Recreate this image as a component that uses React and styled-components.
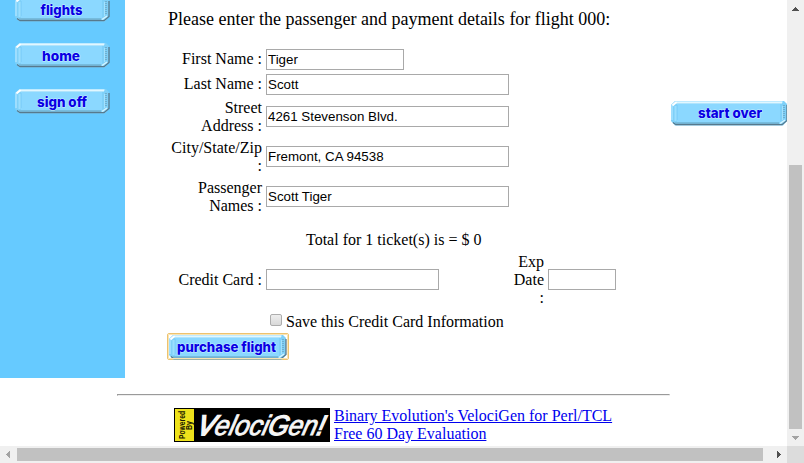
import React from "react";
import styled, { createGlobalStyle } from "styled-components";

const GlobalStyle = createGlobalStyle`
  * { box-sizing: border-box; }
  body { margin: 0; background: #fff; color: #000; overflow: hidden; }
`;

const Window = styled.div`
  display: grid;
  grid-template: 446px 17px / 787px 17px;
  width: 804px;
  height: 463px;
  overflow: hidden;
  font: 16px/18px "Liberation Serif", "Times New Roman", serif;
`;

const Page = styled.div`
  display: flex;
  flex-direction: column;
  overflow: hidden;
`;

const Columns = styled.div`
  display: flex;
  height: 378px;
`;

const Sidebar = styled.nav`
  display: flex;
  flex-direction: column;
  gap: 20px;
  flex: 0 0 125px;
  margin-top: -4px;
  padding: 0 0 0 15px;
  background: #66caff;
`;

const Content = styled.main`
  flex: 0 0 503px;
  padding: 9px 0 0 43px;
`;

const Aside = styled.aside`
  flex: 1 0 159px;
  padding: 100px 0 0 43px;
`;

const ButtonFace = styled.button`
  display: block;
  width: ${(p) => p.$w}px;
  height: 26px;
  padding: 0;
  border: 0;
  background: none;
  cursor: pointer;
  svg { display: block; }
`;

const FocusFrame = styled.div`
  width: 122px;
  height: 27px;
  margin: 2px 0 0 -1px;
  padding: 0 0 0 1px;
  border: 1px solid #edc36f;
  border-radius: 2px;
  outline: 1px solid #f9e4b5;
  outline-offset: -2px;
`;

const ButtonText = styled.text`
  font: 800 13.5px Inter, "Liberation Sans", sans-serif;
  fill: #0a00e4;
  stroke: #c9efff;
  stroke-width: 1px;
  stroke-linejoin: round;
  paint-order: stroke;
`;

const Heading = styled.h1`
  margin: 0 0 20px;
  height: 20px;
  font-size: 18px;
  line-height: 20px;
  font-weight: 400;
  white-space: nowrap;
`;

const Fields = styled.form`
  display: flex;
  flex-direction: column;
  gap: 4px;
`;

const Row = styled.div`
  display: grid;
  grid-template-columns: 94px auto;
  column-gap: 4px;
  align-items: center;
  justify-content: start;
  height: ${(p) => p.$h}px;
`;

const Label = styled.label`
  text-align: right;
  white-space: nowrap;
`;

const ShortLabel = styled(Label)`
  align-self: start;
  padding-top: 1px;
`;

const TextInput = styled.input`
  display: block;
  align-self: start;
  width: ${(p) => p.$w}px;
  height: 21px;
  margin: ${(p) => p.$drop || 0}px 0 0;
  padding: 1px;
  border: 1px solid #a9a9a9;
  border-radius: 0;
  outline: none;
  background: #fff;
  color: #000;
  font: 13.33px "Liberation Sans", Arial, sans-serif;
`;

const Total = styled.p`
  margin: 12px 0 0 138px;
  height: 18px;
  white-space: nowrap;
`;

const PaymentRow = styled.div`
  display: grid;
  grid-template-columns: 94px 173px 101px 68px;
  column-gap: 4px;
  align-items: center;
  height: 54px;
`;

const SaveRow = styled.label`
  display: flex;
  gap: 4px;
  height: 18px;
  margin: 2px 0 0 102px;
  white-space: nowrap;
`;

const Check = styled.input`
  appearance: none;
  width: 12px;
  height: 12px;
  margin: 1px 0 0;
  border: 1px solid #adadad;
  border-radius: 2px;
  background: linear-gradient(#eee, #d9d9d9);
`;

const Footer = styled.footer`
  width: 553px;
  margin: 16px 0 0 117px;
`;

const Rule = styled.hr`
  height: 2px;
  margin: 0 0 12px;
  border: 1px solid;
  border-color: #9a9a9a #eee #eee #9a9a9a;
`;

const Credits = styled.div`
  display: flex;
  gap: 4px;
  padding-left: 57px;
`;

const Links = styled.div`
  display: flex;
  flex-direction: column;
  align-items: flex-start;
  margin-top: -1px;
  white-space: nowrap;
`;

const Link = styled.a`
  color: #0000ee;
  text-decoration: underline;
`;

const Logo = styled.svg`
  display: block;
  overflow: visible;
`;

const LogoText = styled.text`
  font: italic 400 28px "Liberation Sans", sans-serif;
  fill: #f6f6f6;
  stroke: #f6f6f6;
  stroke-width: 0.9px;
`;

const LogoTag = styled.text`
  font: 700 8.5px "Liberation Sans", sans-serif;
  fill: #181600;
`;

const VTrack = styled.div`
  display: flex;
  flex-direction: column;
  align-items: center;
  justify-content: space-between;
  background: #f0f0f0;
`;

const VThumb = styled.div`
  width: 13px;
  height: 264px;
  margin-top: 148px;
  background: #c1c1c1;
`;

const HTrack = styled.div`
  display: flex;
  align-items: center;
  background: #f0f0f0;
`;

const HThumb = styled.div`
  width: 746px;
  height: 13px;
  background: #c1c1c1;
`;

const HEnd = styled.div`
  padding-left: 6px;
`;

const Corner = styled.div`
  background: #dcdcdc;
`;

const ArrowBox = styled.svg`
  display: block;
  flex: none;
  width: 17px;
  height: 17px;
`;

const arrows = {
  up: "M5 11V10H6V9H7V8H8V7H9V8H10V9H11V10H12V11Z",
  down: "M5 7H12V8H11V9H10V10H9V11H8V10H7V9H6V8H5Z",
  left: "M10 5V12H9V11H8V10H7V9H6V8H7V7H8V6H9V5Z",
  right: "M8 5H9V6H10V7H11V8H12V9H11V10H10V11H9V12H8Z",
};

function Arrow({ dir, color }) {
  return (
    <ArrowBox viewBox="0 0 17 17" shapeRendering="crispEdges">
      <path d={arrows[dir]} fill={color} />
    </ArrowBox>
  );
}

function BevelButton({ width, label, x, y = 18.4, textWidth }) {
  const w = width;
  return (
    <ButtonFace $w={w} type="button">
      <svg width={w} height="26" viewBox={`0 0 ${w} 26`}>
        <path d={`M4 1H${w - 4}L${w - 1} 4V21L${w - 5} 25.5H4L0 21V5Z`} fill="#7fd0f8" />
        <path d={`M2 22.5L5 24.7H${w - 6}L${w - 1} 20.5V5`} fill="none" stroke="#57798c" strokeWidth="1.3" />
        <path d={`M4 23.2H${w - 9}`} fill="none" stroke="#6fa8c4" strokeWidth="1.2" />
        <path d={`M1 20V5L5 2H${w - 5}`} fill="none" stroke="#a9e2ff" strokeWidth="1.5" />
        <path d={`M5 2.6H${w - 6}`} stroke="#e2f7ff" strokeWidth="2" />
        <path d="M1.5 5.5L5.5 2" stroke="#fff" strokeWidth="2" />
        <rect x="6" y="4" width={w - 14} height="18" fill="#8bd8ff" />
        <path d="M4.5 6V21" stroke="#9bdeff" strokeWidth="2" />
        <path d="M6.5 5V20" stroke="#80d0fb" />
        <path d={`M${w - 5.5} 6V20`} stroke="#a5e2fd" />
        <path d={`M${w - 4} 5V19`} stroke="#6da7c5" strokeWidth="1.6" strokeDasharray="1 1" />
        <path d={`M${w - 8} 23.5L${w - 3} 20`} stroke="#d8f5ff" strokeWidth="1.4" />
        <ButtonText x={x} y={y} textLength={textWidth} lengthAdjust="spacingAndGlyphs">{label}</ButtonText>
      </svg>
    </ButtonFace>
  );
}

function VelociLogo() {
  return (
    <Logo width="156" height="34" viewBox="0 0 156 34">
      <rect width="156" height="34" fill="#000" />
      <rect x="1" y="1" width="19" height="32" fill="#eee21b" />
      <LogoTag transform="translate(10.8 31) rotate(-90)" textLength="28" lengthAdjust="spacingAndGlyphs">Powered</LogoTag>
      <LogoTag transform="translate(17.6 22) rotate(-90)" textLength="9" lengthAdjust="spacingAndGlyphs">By</LogoTag>
      <LogoText transform="translate(22 26.5) skewX(-14)" textLength="127" lengthAdjust="spacingAndGlyphs">
        <tspan strokeWidth="2">V</tspan>
        <tspan>eloci</tspan>
        <tspan strokeWidth="1.3">G</tspan>
        <tspan>en</tspan>
        <tspan strokeWidth="1.5">!</tspan>
      </LogoText>
    </Logo>
  );
}

const passengerRows = [
  { label: ["First Name :"], value: "Tiger", width: 138, height: 21 },
  { label: ["Last Name :"], value: "Scott", width: 243, height: 21 },
  { label: ["Street", "Address :"], value: "4261 Stevenson Blvd.", width: 243, height: 36, drop: 7 },
  { label: ["City/State/Zip", ":"], value: "Fremont, CA 94538", width: 243, height: 36, drop: 7 },
  { label: ["Passenger", "Names :"], value: "Scott Tiger", width: 243, height: 36, drop: 7 },
];

function Lines({ items }) {
  return items.map((line, i) => (
    <React.Fragment key={line}>
      {i > 0 && <br />}
      {line}
    </React.Fragment>
  ));
}

export default function App() {
  return (
    <Window>
      <GlobalStyle />
      <Page>
        <Columns>
          <Sidebar>
            <BevelButton width={95} label="flights" x={25.5} y={19} textWidth={42} />
            <BevelButton width={95} label="home" x={27} y={19} textWidth={38} />
            <BevelButton width={95} label="sign off" x={22} y={19} textWidth={50} />
          </Sidebar>
          <Content>
            <Heading>Please enter the passenger and payment details for flight 000:</Heading>
            <Fields>
              {passengerRows.map((row) => {
                const RowLabel = row.label.length > 1 ? Label : ShortLabel;
                return (
                  <Row key={row.value} $h={row.height}>
                    <RowLabel><Lines items={row.label} /></RowLabel>
                    <TextInput $w={row.width} $drop={row.drop} defaultValue={row.value} />
                  </Row>
                );
              })}
              <Total>Total for 1 ticket(s) is = $ 0</Total>
              <PaymentRow>
                <Label>Credit Card :</Label>
                <TextInput $w={173} $drop={16} />
                <Label><Lines items={["Exp", "Date", ":"]} /></Label>
                <TextInput $w={68} $drop={16} />
              </PaymentRow>
              <SaveRow>
                <Check type="checkbox" />
                Save this Credit Card Information
              </SaveRow>
            </Fields>
            <FocusFrame>
              <BevelButton width={118} label="purchase flight" x={8} textWidth={99} />
            </FocusFrame>
          </Content>
          <Aside>
            <BevelButton width={117} label="start over" x={27} textWidth={64} />
          </Aside>
        </Columns>
        <Footer>
          <Rule />
          <Credits>
            <VelociLogo />
            <Links>
              <Link href="#velocigen">Binary Evolution's VelociGen for Perl/TCL</Link>
              <Link href="#evaluation">Free 60 Day Evaluation</Link>
            </Links>
          </Credits>
        </Footer>
      </Page>
      <VTrack>
        <Arrow dir="up" color="#505050" />
        <VThumb />
        <Arrow dir="down" color="#a3a3a3" />
      </VTrack>
      <HTrack>
        <Arrow dir="left" color="#a3a3a3" />
        <HThumb />
        <HEnd><Arrow dir="right" color="#505050" /></HEnd>
      </HTrack>
      <Corner />
    </Window>
  );
}
